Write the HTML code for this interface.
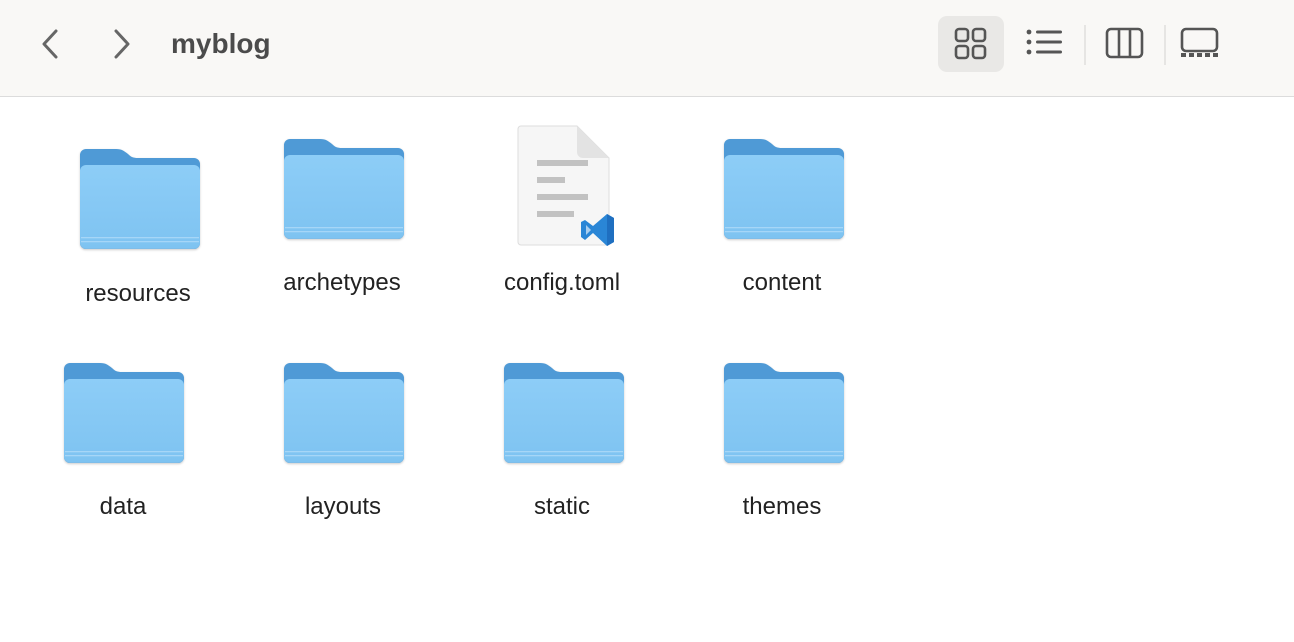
<!DOCTYPE html>
<html><head><style>
body{margin:0;width:1294px;height:642px;background:#fff;font-family:"Liberation Sans",sans-serif;position:relative;overflow:hidden}
.hdr{position:absolute;left:0;top:0;width:1294px;height:96px;background:#f9f8f6;border-bottom:1px solid #dcdcdc}
.t{position:absolute;font-size:28px;font-weight:bold;color:#4b4b4b;left:171px;top:28px}
.sel{position:absolute;left:938px;top:16px;width:66px;height:56px;background:#e9e8e6;border-radius:9px}
.sep{position:absolute;top:25px;width:2px;height:40px;background:#e6e5e3}
.f{position:absolute;width:120px;height:102px;filter:drop-shadow(0 1px 1px rgba(0,0,0,.2))}
.l{position:absolute;width:200px;text-align:center;font-size:24px;color:#222}
</style></head><body>
<div class="hdr">
<svg style="position:absolute;left:38px;top:28px" width="24" height="32"><path d="M18 3 L6 16 L18 29" stroke="#666" stroke-width="3" fill="none" stroke-linecap="round" stroke-linejoin="round"/></svg>
<svg style="position:absolute;left:110px;top:28px" width="24" height="32"><path d="M6 3 L18 16 L6 29" stroke="#666" stroke-width="3" fill="none" stroke-linecap="round" stroke-linejoin="round"/></svg>
<div class="t">myblog</div>
<div class="sel"></div>
<svg style="position:absolute;left:954px;top:27px" width="34" height="34" fill="none" stroke="#555" stroke-width="2.6"><rect x="2" y="2" width="12" height="12" rx="3"/><rect x="19" y="2" width="12" height="12" rx="3"/><rect x="2" y="19" width="12" height="12" rx="3"/><rect x="19" y="19" width="12" height="12" rx="3"/></svg>
<svg style="position:absolute;left:1025px;top:28px" width="40" height="30" fill="#555"><circle cx="4" cy="4" r="2.4"/><circle cx="4" cy="14" r="2.4"/><circle cx="4" cy="24" r="2.4"/><rect x="11" y="2.5" width="26" height="3" rx="1.5"/><rect x="11" y="12.5" width="26" height="3" rx="1.5"/><rect x="11" y="22.5" width="26" height="3" rx="1.5"/></svg>
<div class="sep" style="left:1084px"></div>
<svg style="position:absolute;left:1105px;top:27px" width="40" height="34" fill="none" stroke="#555" stroke-width="2.6"><rect x="2" y="2" width="35" height="28" rx="4"/><line x1="14" y1="2" x2="14" y2="30"/><line x1="25" y1="2" x2="25" y2="30"/></svg>
<div class="sep" style="left:1164px"></div>
<svg style="position:absolute;left:1180px;top:27px" width="40" height="34"><rect x="2" y="2" width="35" height="22" rx="4" fill="none" stroke="#555" stroke-width="2.6"/><g fill="#555"><rect x="1" y="26" width="5" height="4"/><rect x="9" y="26" width="5" height="4"/><rect x="17" y="26" width="5" height="4"/><rect x="25" y="26" width="5" height="4"/><rect x="33" y="26" width="5" height="4"/></g></svg>
</div>
<svg width="0" height="0" style="position:absolute"><defs>
<linearGradient id="g" x1="0" y1="0" x2="0" y2="1"><stop offset="0" stop-color="#8dcdf7"/><stop offset="1" stop-color="#7ec3f1"/></linearGradient>
<symbol id="fd" viewBox="0 0 120 102">
<path d="M6 0 H36 C42 0 44 2 48 5 C51 8 53 9 58 9 H114 A6 6 0 0 1 120 15 V94 A6 6 0 0 1 114 100 H6 A6 6 0 0 1 0 94 V6 A6 6 0 0 1 6 0Z" fill="#4f9ad6"/>
<rect x="0" y="17" width="120" height="83" rx="6" fill="#7ebde9"/>
<rect x="0" y="16" width="120" height="83" rx="6" fill="url(#g)"/>
<rect x="1" y="88" width="118" height="1.3" fill="#a6d6f7"/><rect x="1" y="92" width="118" height="1.3" fill="#a6d6f7"/>
</symbol></defs></svg>
<svg class="f" style="left:80px;top:149px"><use href="#fd"/></svg>
<svg class="f" style="left:284px;top:139px"><use href="#fd"/></svg>
<svg class="f" style="left:724px;top:139px"><use href="#fd"/></svg>
<svg class="f" style="left:64px;top:363px"><use href="#fd"/></svg>
<svg class="f" style="left:284px;top:363px"><use href="#fd"/></svg>
<svg class="f" style="left:504px;top:363px"><use href="#fd"/></svg>
<svg class="f" style="left:724px;top:363px"><use href="#fd"/></svg>
<svg style="position:absolute;left:515px;top:124px" width="105" height="126">
<path d="M6 2 H62 L94 34 V118 A3 3 0 0 1 91 121 H6 A3 3 0 0 1 3 118 V5 A3 3 0 0 1 6 2Z" fill="#f6f6f6" stroke="#ddd"/>
<path d="M62 2 V28 A6 6 0 0 0 68 34 H94Z" fill="#e3e3e3"/>
<g fill="#c2c2c2"><rect x="22" y="36" width="51" height="6"/><rect x="22" y="53" width="28" height="6"/><rect x="22" y="70" width="51" height="6"/><rect x="22" y="87" width="37" height="6"/></g>
<path d="M92 90 L99 94 V118 L92 122 L78 109 L70 116 L66 113 V98 L70 96 L78 102 Z" fill="#2a86d6"/>
<path d="M92 90 L99 94 V118 L92 122 Z" fill="#1f6fc0"/>
<path d="M71 101 L76 106 L71 111Z" fill="#fff" opacity=".6"/>
</svg>
<div class="l" style="left:38px;top:280px">resources</div>
<div class="l" style="left:242px;top:269px">archetypes</div>
<div class="l" style="left:462px;top:269px">config.toml</div>
<div class="l" style="left:682px;top:269px">content</div>
<div class="l" style="left:23px;top:493px">data</div>
<div class="l" style="left:243px;top:493px">layouts</div>
<div class="l" style="left:462px;top:493px">static</div>
<div class="l" style="left:682px;top:493px">themes</div>
</body></html>
